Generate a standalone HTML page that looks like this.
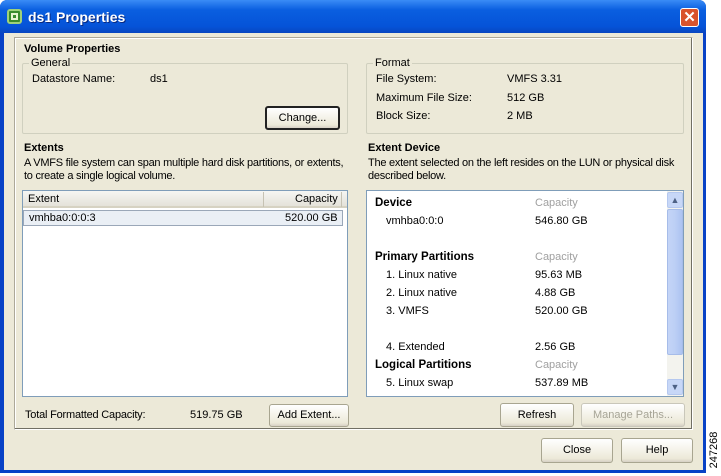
<!DOCTYPE html>
<html><head><style>
*{margin:0;padding:0;box-sizing:border-box}
body{width:721px;height:476px;background:#fff;position:relative;overflow:hidden;font-family:"Liberation Sans",Tahoma,sans-serif;font-size:11px;color:#000}
.a{position:absolute;white-space:nowrap}
.b{font-weight:bold}
.g{color:#a0a0a0}
.btn{position:absolute;border:1px solid #003c74;border-radius:3px;background:linear-gradient(#fff,#ece9d8 85%,#d6d0c5);text-align:center;font-size:11px}
.gb{position:absolute;border:1px solid #d0d0bf;border-radius:2px}
.lg{position:absolute;background:#ece9d8;padding:0 2px;top:-7px;left:8px}
</style></head><body>
<div class="a" style="left:0;top:0;width:706px;height:473px;background:#0842c6;border-radius:7px 7px 0 0"></div>
<div class="a" style="left:0;top:0;width:706px;height:33px;background:linear-gradient(#3a8cf6,#0a5fe0 30%,#0553d8 80%,#0846c0);border-radius:7px 7px 0 0"></div>
<div class="a" style="left:7px;top:9px;width:15px;height:15px;border:2px solid #9fd27a;border-radius:3px;background:#3b8b2c"></div>
<div class="a" style="left:11px;top:13px;width:7px;height:7px;border:2px solid #e8f4d0"></div>
<div class="a b" style="left:28px;top:9px;font-size:14px;color:#fff;text-shadow:1px 1px #0a2a80">ds1 Properties</div>
<div class="a" style="left:680px;top:8px;width:19px;height:19px;background:#d9532c;border:1px solid #fff;border-radius:3px;color:#fff;font-size:15px;text-align:center;line-height:17px;font-weight:bold">✕</div>
<div class="a" style="left:4px;top:33px;width:699px;height:437px;background:#ece9d8"></div>
<div class="a" style="left:14px;top:37px;width:679px;height:393px;border:1px solid #aca899;border-right-color:#fff;border-bottom-color:#fff;box-shadow:inset -1px -1px #716f64,inset 1px 1px #fff"></div>

<div class="a b" style="left:24px;top:43px">Volume Properties</div>
<div class="gb" style="left:22px;top:63px;width:326px;height:71px"><span class="lg" style="left:6px">General</span></div>
<div class="a" style="left:32px;top:73px">Datastore Name:</div>
<div class="a" style="left:150px;top:73px">ds1</div>
<div class="btn" style="left:265px;top:106px;width:75px;height:24px;line-height:21px;border-width:2px;border-color:#222">Change...</div>

<div class="gb" style="left:366px;top:63px;width:318px;height:71px"><span class="lg" style="left:6px">Format</span></div>
<div class="a" style="left:376px;top:73px">File System:</div><div class="a" style="left:507px;top:73px">VMFS 3.31</div>
<div class="a" style="left:376px;top:92px">Maximum File Size:</div><div class="a" style="left:507px;top:92px">512 GB</div>
<div class="a" style="left:376px;top:110px">Block Size:</div><div class="a" style="left:507px;top:110px">2 MB</div>

<div class="a b" style="left:24px;top:142px">Extents</div>
<div class="a" style="left:24px;top:157px;line-height:13px;letter-spacing:-0.25px">A VMFS file system can span multiple hard disk partitions, or extents,<br>to create a single logical volume.</div>
<div class="a" style="left:22px;top:190px;width:326px;height:207px;background:#fff;border:1px solid #7f9db9"></div>
<div class="a" style="left:23px;top:191px;width:324px;height:17px;background:linear-gradient(#f6f6f3,#e4e2d9);border-bottom:2px solid #d6d2c2"></div>
<div class="a" style="left:263px;top:192px;width:1px;height:15px;background:#c6c2b3"></div>
<div class="a" style="left:341px;top:192px;width:1px;height:15px;background:#c6c2b3"></div>
<div class="a" style="left:28px;top:193px">Extent</div>
<div class="a" style="left:295px;top:193px">Capacity</div>
<div class="a" style="left:23px;top:210px;width:320px;height:16px;background:#eaeff5;border:1px solid #9aa7b8"></div>
<div class="a" style="left:29px;top:212px">vmhba0:0:0:3</div>
<div class="a" style="left:285px;top:212px">520.00 GB</div>

<div class="a" style="left:25px;top:409px;letter-spacing:-0.2px">Total Formatted Capacity:</div>
<div class="a" style="left:190px;top:409px">519.75 GB</div>
<div class="btn" style="left:269px;top:404px;width:80px;height:23px;line-height:21px;border-color:#a8a590">Add Extent...</div>

<div class="a b" style="left:368px;top:142px">Extent Device</div>
<div class="a" style="left:368px;top:157px;line-height:13px;letter-spacing:-0.25px">The extent selected on the left resides on the LUN or physical disk<br>described below.</div>
<div class="a" style="left:366px;top:190px;width:318px;height:207px;background:#fff;border:1px solid #7f9db9"></div>
<div class="a" style="left:667px;top:191px;width:16px;height:205px;background:#f3f3ee"></div>
<div class="a" style="left:667px;top:192px;width:16px;height:16px;background:#c7d7f7;border:1px solid #b5c8ef;border-radius:2px;color:#4d6185;font-size:9px;text-align:center;line-height:14px">▲</div>
<div class="a" style="left:667px;top:209px;width:16px;height:146px;background:linear-gradient(90deg,#c4d4f6,#bccff5 50%,#adc3f1);border:1px solid #a6bce9;border-radius:2px"></div>
<div class="a" style="left:667px;top:379px;width:16px;height:16px;background:#c7d7f7;border:1px solid #b5c8ef;border-radius:2px;color:#4d6185;font-size:9px;text-align:center;line-height:14px">▼</div>

<div class="a b" style="left:375px;top:197px;font-size:11.5px">Device</div><div class="a g" style="left:535px;top:197px">Capacity</div>
<div class="a" style="left:386px;top:215px">vmhba0:0:0</div><div class="a" style="left:535px;top:215px">546.80 GB</div>
<div class="a b" style="left:375px;top:251px;font-size:11.5px">Primary Partitions</div><div class="a g" style="left:535px;top:251px">Capacity</div>
<div class="a" style="left:386px;top:269px">1. Linux native</div><div class="a" style="left:535px;top:269px">95.63 MB</div>
<div class="a" style="left:386px;top:287px">2. Linux native</div><div class="a" style="left:535px;top:287px">4.88 GB</div>
<div class="a" style="left:386px;top:305px">3. VMFS</div><div class="a" style="left:535px;top:305px">520.00 GB</div>
<div class="a" style="left:386px;top:341px">4. Extended</div><div class="a" style="left:535px;top:341px">2.56 GB</div>
<div class="a b" style="left:375px;top:359px;font-size:11.5px">Logical Partitions</div><div class="a g" style="left:535px;top:359px">Capacity</div>
<div class="a" style="left:386px;top:377px">5. Linux swap</div><div class="a" style="left:535px;top:377px">537.89 MB</div>

<div class="btn" style="left:500px;top:403px;width:74px;height:24px;line-height:22px;border-color:#a8a590">Refresh</div>
<div class="btn" style="left:581px;top:403px;width:104px;height:24px;line-height:22px;border-color:#c9c7ba;color:#a6a496">Manage Paths...</div>
<div class="btn" style="left:541px;top:438px;width:72px;height:25px;line-height:23px;border-color:#a8a590">Close</div>
<div class="btn" style="left:621px;top:438px;width:72px;height:25px;line-height:23px;border-color:#a8a590">Help</div>

<div class="a" style="left:694px;top:444px;width:40px;height:12px;line-height:12px;text-align:center;font-size:11px;transform:rotate(-90deg)">247268</div>
</body></html>
